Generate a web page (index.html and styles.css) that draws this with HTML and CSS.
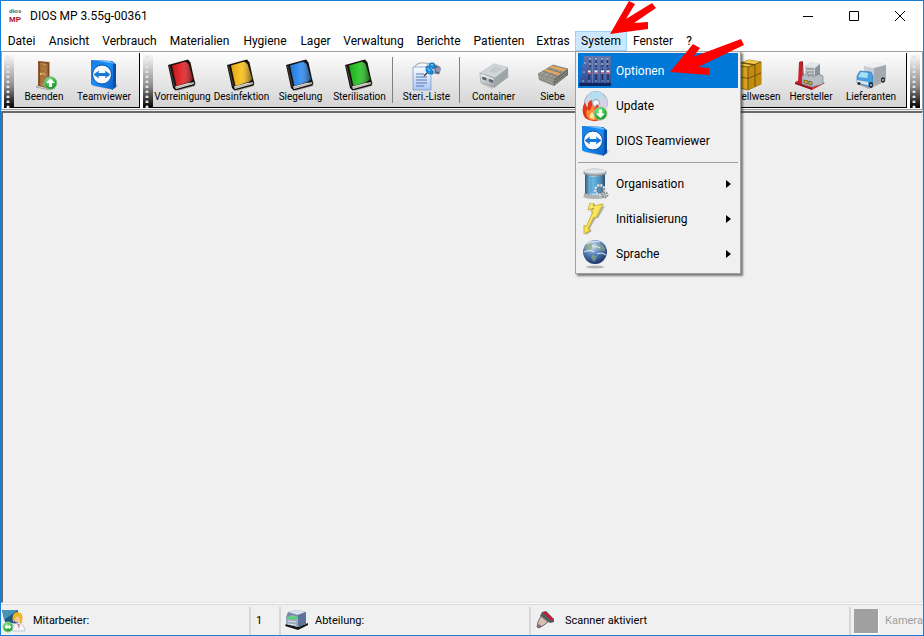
FILE: index.html
```html
<!DOCTYPE html>
<html lang="de">
<head>
<meta charset="utf-8">
<title>DIOS MP 3.55g-00361</title>
<link rel="stylesheet" href="styles.css">
</head>
<body>
<svg class="defs" aria-hidden="true">
  <defs>
    <linearGradient id="g-blue" x1="0" y1="0" x2="1" y2="1"><stop offset="0" stop-color="#1b7be0"/><stop offset=".5" stop-color="#1590f8"/><stop offset="1" stop-color="#0a5fc8"/></linearGradient>
    <linearGradient id="g-shine" x1="0" y1="0" x2="1" y2="0"><stop offset="0" stop-color="#000" stop-opacity=".12"/><stop offset=".45" stop-color="#fff" stop-opacity=".12"/><stop offset="1" stop-color="#000" stop-opacity=".55"/></linearGradient>
    <linearGradient id="g-door" x1="0" y1="0" x2="1" y2="0"><stop offset="0" stop-color="#a36c38"/><stop offset=".6" stop-color="#c9965c"/><stop offset="1" stop-color="#8a5628"/></linearGradient>
    <radialGradient id="g-green" cx=".4" cy=".3" r=".8"><stop offset="0" stop-color="#9be89a"/><stop offset=".6" stop-color="#2fae3c"/><stop offset="1" stop-color="#15782a"/></radialGradient>
    <radialGradient id="g-globe" cx=".4" cy=".25" r=".8"><stop offset="0" stop-color="#d5e6f8"/><stop offset=".45" stop-color="#5b83bd"/><stop offset="1" stop-color="#142a60"/></radialGradient>
    <linearGradient id="g-steel" x1="0" y1="0" x2="1" y2="1"><stop offset="0" stop-color="#e8ebed"/><stop offset="1" stop-color="#9da4a9"/></linearGradient>
    <linearGradient id="g-paper" x1="0" y1="0" x2="0" y2="1"><stop offset="0" stop-color="#fafcff"/><stop offset="1" stop-color="#a9c6f5"/></linearGradient>
    <linearGradient id="g-mixer" x1="0" y1="0" x2="0" y2="1"><stop offset="0" stop-color="#5f76b2"/><stop offset="1" stop-color="#2c4a92"/></linearGradient>
    <linearGradient id="g-tank" x1="0" y1="0" x2="1" y2="0"><stop offset="0" stop-color="#1f5a88"/><stop offset=".4" stop-color="#c4e8fa"/><stop offset="1" stop-color="#1d4f78"/></linearGradient>
    <linearGradient id="g-bolt" x1="0" y1="0" x2="1" y2="1"><stop offset="0" stop-color="#fff27a"/><stop offset="1" stop-color="#f0d832"/></linearGradient>
  </defs>
  <symbol id="i-tv" viewBox="0 0 32 32">
    <path d="M5 27 24 31 30 27 28 24z" fill="#777" opacity=".4"/>
    <path d="M3 1 24 2 28 5 28 28 24 31 24 30z" fill="#0b50a8"/>
    <path d="M4 1 22 2.500Q25 3 25 5V29Q25 30.500 23 30L5 26.500Q3 26 3 24.500V2Q3 1 4 1z" fill="url(#g-blue)"/>
    <path d="M4 1 22 2 28 5 25 4.500z" fill="#6fbcff"/>
    <circle cx="14" cy="15.500" r="9.500" fill="#f8fbff" stroke="#0a4ea4"/>
    <path d="M5.500 15.500 11 11.500 10.500 14H17.500L17 11.500 22.500 15.500 17 19.500 17.500 17H10.500L11 19.500z" fill="#1479d8"/>
  </symbol>
  <symbol id="i-book" viewBox="1 0 32 32">
    <path d="M9 30 30 23 29 27 12 32z" fill="#555" opacity=".4"/>
    <path d="M2 6 22 .500 24.500 3.500 29 24 28.500 26.500 9.500 31.500 7 29z" fill="#17120f"/>
    <path d="M9 27.500 27.500 22.500 28 25 10 30z" fill="#e6e3dc"/>
    <path d="M9 29 28 24" stroke="#8a857c" stroke-width=".6"/>
    <path d="M6 6.500 21.500 2 27.500 21.500 10.500 27z" fill="currentColor"/>
    <path d="M6 6.500 21.500 2 27.500 21.500 10.500 27z" fill="url(#g-shine)"/>
    <path d="M18 1.800 22.500 1.500 24 6zM23 24 27.800 19.500 28.500 23z" fill="#17120f"/>
    <path d="M3.500 7 8.500 27.500" stroke="#5a5148" stroke-width=".8"/>
  </symbol>
  <symbol id="i-door" viewBox="-3 0 32 32">
    <path d="M5 28 18 31 24 29 8 26z" fill="#cfcfcf" stroke="#888" stroke-width=".6"/>
    <path d="M7 2 18.500 3V28L7 27z" fill="#8a5a2c"/>
    <path d="M8.500 3 17.500 5V29.500L8.500 26.500z" fill="url(#g-door)" stroke="#663b18" stroke-width=".5"/>
    <path d="M10 6 12.200 6.500V13L10 12.500zM13.600 6.800 16 7.300V14L13.600 13.500zM10 16 12.200 16.500V24L10 23.500zM13.600 17 16 17.500V25L13.600 24.500z" fill="#b67d45" stroke="#855629" stroke-width=".5"/>
    <circle cx="10" cy="15" r="1" fill="#f0cf60"/>
    <circle cx="19.500" cy="24" r="6.300" fill="url(#g-green)" stroke="#7dc283" stroke-width=".8"/>
    <path d="M19.500 19.500 24 24H21V28H18V24H15z" fill="#fff"/>
  </symbol>
  <symbol id="i-list" viewBox="1 0 32 32">
    <path d="M5 7Q8 3 15 4L27 6 31 9 29 15 22 14 6 11z" fill="#c7cbd0" stroke="#888" stroke-width=".6"/>
    <path d="M5 8Q9 3 17 5L15 9z" fill="#f8f8f8"/>
    <path d="M24 6 30 8 29 15 25 14z" fill="#555a68"/><circle cx="28" cy="10.500" r="2.500" fill="#8f95b8"/>
    <path d="M3 8H18L21 11V31H3z" fill="url(#g-paper)" stroke="#7f99c9" stroke-width=".8"/>
    <path d="M6 15H14M6 18H17M6 21H17M6 24H17M6 27H14" stroke="#5877b5" stroke-width="1"/>
    <path d="M14 17 19 12" stroke="#333" stroke-width="1.300"/>
    <path d="M16 8 18 7 23 12 23 15 19 15 16 12zM20 4 24 4 25 8 23 10 19 7z" fill="#168fe0" stroke="#0867ad" stroke-width=".7"/>
    <path d="M21 5.500 23 6M17.500 9 20 12" stroke="#a9e0ff" stroke-width="1"/>
  </symbol>
  <symbol id="i-container" viewBox="-1 -1 34 34">
    <path d="M2 25 14 31 32 18 28 15z" fill="#999" opacity=".45"/>
    <path d="M1 14 16 4 31 8 17 19z" fill="#d2d6d8" stroke="#b0b5b8" stroke-width=".5"/>
    <path d="M1 14 17 19V29L2 24z" fill="url(#g-steel)" stroke="#858c90" stroke-width=".5"/>
    <path d="M17 19 31 8V18L17 29z" fill="#9ea5a9"/>
    <path d="M10 12 17 7 25 9 18 14z" fill="#c4c9cc"/>
    <path d="M3.500 17.500 8 19V22L3.500 20.500zM10.500 20 15 21.500V24.500L10.500 23z" fill="#5c656b"/>
    <path d="M3 16.500 15.500 20.500" stroke="#fff" stroke-width=".8"/>
  </symbol>
  <symbol id="i-tray" viewBox="0 0 32 32">
    <path d="M1 15 16 6 31 10 17 20z" fill="#a19f98" stroke="#79766e" stroke-width=".7"/>
    <path d="M1 15 17 20V27L2 21z" fill="#8d8b85"/><path d="M17 20 31 10V16L17 27z" fill="#6c6a65"/>
    <path d="M3 17 16 21.500M3 19 16 24M18 22 30 13M18 25 30 15" stroke="#c5c2ba" stroke-width=".8" stroke-dasharray="1 1"/>
    <path d="M6 12 20 17.500M10 9.500 25 14M14 7.500 28 12M5 16 19 7M10 17.500 24 9M14 19 28 10" stroke="#6f6c65" stroke-width=".6"/>
    <path d="M7 11.500 9 10.300 23.500 14.500 21.500 16zM12.500 8.300 15 7 29 10.500 26.500 12.300z" fill="#f2a84c"/>
  </symbol>
  <symbol id="i-boxes" viewBox="2 0 32 32">
    <path d="M2 6 16 1 28 3V25L15 31 2 28z" fill="#d9a31f" stroke="#8c6508" stroke-width=".8"/>
    <path d="M2 6 16 1 28 3 15 8z" fill="#f2c84b"/><path d="M15 8 28 3V25L15 31z" fill="#c28c12"/>
    <path d="M2 17 15 19.500 28 14M8 4 22 6V28M15 8V31M9 3.500 21 5.500M15 8 28 3M2 6 15 8" fill="none" stroke="#5e4305" stroke-width=".8"/>
  </symbol>
  <symbol id="i-factory" viewBox="1 0 32 32">
    <path d="M1 23 12 18 31 24 18 31z" fill="#d32f38"/><path d="M1 23 18 29V31L1 25z" fill="#8f131c"/>
    <path d="M11 7 17 3 26 5V24L11 23z" fill="#c8cdd2"/><path d="M11 7 17 3 26 5 21 9z" fill="#e3e6e9"/><path d="M21 9 26 5V24H21z" fill="#8b9299"/>
    <path d="M12 10H20M12 13H20M12 16H20" stroke="#7b828a" stroke-width="1"/>
    <path d="M5 3 8 2 9 26 4 24z" fill="#c9202b"/><path d="M8 2 9 3 10 26 9 26z" fill="#7d0d16"/>
    <path d="M8 17 14 14V18L19 15V18L25 15 29 17V25L18 28 8 25z" fill="#b7bdc3" stroke="#6e757c" stroke-width=".6"/>
    <path d="M10 21 14 22V25L10 24zM15 22 18 23V26L15 25.500z" fill="#d8b02c" stroke="#403818" stroke-width=".6"/>
  </symbol>
  <symbol id="i-truck" viewBox="0 0 32 32">
    <path d="M4 26 14 30 31 22 29 19z" fill="#777" opacity=".5"/>
    <path d="M9 7 22 3 31 6V20L18 25 9 22z" fill="#c9ced3"/><path d="M9 7 22 3 31 6 19 9z" fill="#eef0f1"/><path d="M19 9 31 6V20L19 25z" fill="#a4aab1"/>
    <path d="M2 17 5 12 16 13 18 17V25L15 28 2 24z" fill="#4aa0df" stroke="#2c6da7" stroke-width=".6"/>
    <path d="M4 16.500 6 13 13 14 12.500 19 3 18z" fill="#a6e2f4"/><path d="M2 21 13 23V26.500L2 23.500z" fill="#dbe2e7"/>
    <ellipse cx="16" cy="26" rx="2" ry="3" fill="#252b31"/><ellipse cx="28" cy="21" rx="2" ry="2.800" fill="#252b31"/><circle cx="4" cy="24.500" r="1.500" fill="#252b31"/>
    <circle cx="16" cy="26" r="1" fill="#c5c5c5"/><circle cx="28" cy="21" r="1" fill="#c5c5c5"/>
  </symbol>
  <symbol id="i-mixer" viewBox="0 0 32 32">
    <path d="M5 1H32V31H0z" fill="url(#g-mixer)"/><path d="M0 28H32V31H0z" fill="#10235c"/>
    <path d="M13.500 2V28M20 2V28M26 2V28" stroke="#8296cc" stroke-width=".6"/>
    <path d="M11 4V12M17 4V12M23 4V12M28.500 4V12M10 14V27M17 14V27M23.500 14V27M29 14V27" stroke="#1c2c58" stroke-width="1.200"/>
    <path d="M10 4H12M16 4H18M22 4H24M27.500 4H29.500M10 9H12M16 9H18M22 9H24M27.500 9H29.500" stroke="#c0b4bd" stroke-width="1.600"/>
    <path d="M9 17H11.500M15.500 17H18.500M22 17H25M27.500 17H30.500" stroke="#f4eef2" stroke-width="3.500"/>
    <path d="M9 18H11.500M15.500 18H18.500M22 18H25M27.500 18H30.500" stroke="#c04860" stroke-width="1.500"/>
    <path d="M9 26H11M16 26H18M22.500 26H24.500M28 26H30" stroke="#b9b4c5" stroke-width="1"/>
    <path d="M5 8H7M4 17H6M3 26H5" stroke="#c9d4f2" stroke-width=".8"/>
  </symbol>
  <symbol id="i-burn" viewBox="-1 0 32 32">
    <circle cx="16" cy="13" r="11.500" fill="#cbd8e5" stroke="#a2adba"/><path d="M16 13 8 4.500Q16-1 23 4z" fill="#b5dff0"/><path d="M16 13 27 9Q29 16 24 22z" fill="#d8cfe8"/>
    <circle cx="16" cy="13" r="3.500" fill="#f5f6f8" stroke="#93a0ad"/>
    <path d="M5 28Q0 20 5 12Q6 17 8 17Q7 11 12 10Q11 15 15 18L17 14Q22 20 20 30Q12 33 5 28z" fill="#e3351a"/>
    <path d="M8 28Q5 24 7 19Q9 22 10 20Q12 17 12 15Q16 20 15 22L17 20Q19 26 16 30Q11 31 8 28z" fill="#ff8d35"/>
    <path d="M10 28Q9 25 12 22Q15 25 14 29z" fill="#ffe7a0"/>
    <circle cx="20.500" cy="23.500" r="6.500" fill="url(#g-green)" stroke="#8bcb8c"/><path d="M19 19.500H22V23.500H25L20.500 28 16 23.500H19z" fill="#fff"/>
  </symbol>
  <symbol id="i-tank" viewBox="-1 0 32 32">
    <ellipse cx="15" cy="28.500" rx="12" ry="2.500" fill="#8a8a8a" opacity=".6"/>
    <path d="M5 4H25V27Q15 31 5 27z" fill="url(#g-tank)"/><path d="M10 9H20V25Q14 26 10 25z" fill="#2e92cf" opacity=".6"/>
    <path d="M4 3Q15-1 26 3V6Q15 10 4 6z" fill="#a9b0b4" stroke="#737b80" stroke-width=".6"/><ellipse cx="15" cy="3.200" rx="11" ry="2.300" fill="#e0e5e7"/>
    <path d="M4 25Q15 29 26 25V28Q15 32 4 28z" fill="#aeb5b9"/>
    <circle cx="20" cy="22" r="4.500" fill="none" stroke="#d7dde1" stroke-width="3" stroke-dasharray="2 1"/><circle cx="20" cy="22" r="3" fill="none" stroke="#68747c"/>
    <circle cx="25" cy="27" r="2.500" fill="none" stroke="#87939a" stroke-width="2" stroke-dasharray="1.500 1"/>
  </symbol>
  <symbol id="i-bolt" viewBox="-1 0 32 32">
    <path d="M12 1H15L14 5 25 3 18 15.500 16 15 9 27 12 28 6 32 6 24 8 25 13 12 11 12 15 6 10 8z" fill="#777" opacity=".5"/>
    <path d="M10 0H14L13 3 23 1 16 15 14 14 8 26 11 27 4 31 4 22 6 24 13 9 11 9 14 5 8 7z" fill="url(#g-bolt)" stroke="#b59a24" stroke-width=".7"/>
  </symbol>
  <symbol id="i-globe" viewBox="-1 0 32 32">
    <ellipse cx="15" cy="29" rx="9" ry="1.500" fill="#777" opacity=".5"/>
    <circle cx="15" cy="14" r="12" fill="url(#g-globe)"/>
    <path d="M5 9Q8 4 13 5L12 8 15 9 11 11 9 14 6 12zM17 5Q23 5 25 11L24 14 22 12 19 13 17 10 19 8zM12 17 17 18 16 21 14 24 11 20z" fill="#8aa67c" opacity=".7"/>
    <path d="M7 6Q13 2 20 4M4 14Q10 11 14 14M17 16Q22 14 26 17M12 9Q17 8 20 10" fill="none" stroke="#f5f9ff" stroke-width="1.300" opacity=".7"/>
  </symbol>
  <symbol id="i-user" viewBox="0 0 24 24">
    <path d="M0 1H16V15L3 13z" fill="#1d5680"/><path d="M0 1H16L2 11z" fill="#4894b6"/>
    <path d="M10 22Q10 14 16 14T23 22z" fill="#f2f5fa" stroke="#a2b0c4" stroke-width=".6"/>
    <circle cx="16" cy="9" r="4.500" fill="#f5c69a"/><path d="M11 13Q9 3 16 3Q22 4 20 12Q21 15 18 14Q19 10 16 7Q13 8 12 13z" fill="#eeb51c"/>
    <path d="M15 15 17 20 18 15z" fill="#dc8791"/>
    <circle cx="6" cy="18" r="5" fill="url(#g-green)" stroke="#9bd09c"/><path d="M2.500 18 5 15.500V17H7V15.500L9.500 18 7 20.500V19H5V20.500z" fill="#fff"/>
  </symbol>
  <symbol id="i-server" viewBox="0 0 24 24">
    <path d="M2 15 14 18 24 14 24 16 14 21 1 17z" fill="#141414"/>
    <path d="M4 3 12 1 22 3V15L14 18 2 15V8z" fill="#788aa6"/><path d="M4 3 12 1 22 3 14 6z" fill="#d9e2ee"/><path d="M14 6 22 3V15L14 18z" fill="#5d739a"/>
    <path d="M2 8 9 6 14 8V18L2 15z" fill="#9aa9bb"/><path d="M3 8 12 7 13 10 4 10z" fill="#51d870"/>
    <path d="M4 12 12 13M4 15 12 16" stroke="#dce5ef"/>
  </symbol>
  <symbol id="i-scanner" viewBox="0 0 24 24">
    <path d="M8 3 12 2 20 10 20 13 16 14 6 7z" fill="#555b5e"/><path d="M9 3 12 3 19 10 18 12z" fill="#d9112c"/>
    <path d="M7 7 14 13 10 16 5 19 3 18 4 13z" fill="#d8bfb4" stroke="#6d6a68" stroke-width="1"/><path d="M4 15 8 17 5 19 3 18z" fill="#77716e"/>
  </symbol>
</svg>

<div class="window">
  <header class="titlebar">
    <span class="logo" aria-hidden="true"><span class="logo-top">dios</span><span class="logo-bottom">MP</span></span>
    <h1 class="title">DIOS MP 3.55g-00361</h1>
    <button class="caption" aria-label="Minimieren"><svg viewBox="0 0 10 10"><path d="M0 5.500H10"/></svg></button>
    <button class="caption" aria-label="Maximieren"><svg viewBox="0 0 10 10"><path d="M.5.5H9.500V9.500H.5z"/></svg></button>
    <button class="caption" aria-label="Schließen"><svg viewBox="0 0 10 10"><path d="M0 0 10 10M10 0 0 10"/></svg></button>
  </header>

  <nav class="menubar">
    <button>Datei</button><button>Ansicht</button><button>Verbrauch</button><button>Materialien</button><button>Hygiene</button><button>Lager</button><button>Verwaltung</button><button>Berichte</button><button>Patienten</button><button>Extras</button>
    <div class="menu-open">
      <button class="active" aria-expanded="true">System</button>
      <div class="dropdown" role="menu">
        <button class="entry selected" role="menuitem"><svg class="icon"><use href="#i-mixer"/></svg>Optionen</button>
        <button class="entry" role="menuitem"><svg class="icon"><use href="#i-burn"/></svg>Update</button>
        <button class="entry" role="menuitem"><svg class="icon"><use href="#i-tv"/></svg>DIOS Teamviewer</button>
        <hr>
        <button class="entry more" role="menuitem"><svg class="icon"><use href="#i-tank"/></svg>Organisation</button>
        <button class="entry more" role="menuitem"><svg class="icon"><use href="#i-bolt"/></svg>Initialisierung</button>
        <button class="entry more" role="menuitem"><svg class="icon"><use href="#i-globe"/></svg>Sprache</button>
      </div>
      <svg class="arrows" viewBox="575 0 175 80" aria-hidden="true">
        <path d="M610 34 629 1 635 4 626 19 652 3 656 8 634 23 648 22 648 29z"/>
        <path d="M670 72 693 44 700 48 693 57 741 39 744 45 698 67 709 68 709 75z"/>
      </svg>
    </div>
    <button>Fenster</button><button>?</button>
  </nav>

  <div class="toolbars">
    <div class="band">
      <span class="grip"></span>
      <div class="tools wide">
        <button class="tool"><svg class="icon"><use href="#i-door"/></svg>Beenden</button>
        <button class="tool"><svg class="icon"><use href="#i-tv"/></svg>Teamviewer</button>
      </div>
    </div>
    <div class="band grow">
      <span class="grip"></span>
      <div class="tools">
        <button class="tool"><svg class="icon red"><use href="#i-book"/></svg>Vorreinigung</button>
        <button class="tool"><svg class="icon yellow"><use href="#i-book"/></svg>Desinfektion</button>
        <button class="tool"><svg class="icon blue"><use href="#i-book"/></svg>Siegelung</button>
        <button class="tool"><svg class="icon green"><use href="#i-book"/></svg>Sterilisation</button>
        <span class="divider"></span>
        <button class="tool"><svg class="icon"><use href="#i-list"/></svg>Steri.-Liste</button>
        <span class="divider"></span>
        <button class="tool"><svg class="icon"><use href="#i-container"/></svg>Container</button>
        <button class="tool"><svg class="icon"><use href="#i-tray"/></svg>Siebe</button>
      </div>
      <div class="tools wide end">
        <button class="tool"><svg class="icon"><use href="#i-boxes"/></svg>Bestellwesen</button>
        <button class="tool"><svg class="icon"><use href="#i-factory"/></svg>Hersteller</button>
        <button class="tool"><svg class="icon"><use href="#i-truck"/></svg>Lieferanten</button>
      </div>
    </div>
    <span class="grip"></span>
  </div>

  <main class="workspace"></main>

  <footer class="status">
    <div class="cell"><svg><use href="#i-user"/></svg>Mitarbeiter:</div>
    <div class="cell number">1</div>
    <div class="cell"><svg><use href="#i-server"/></svg>Abteilung:</div>
    <div class="cell"><svg><use href="#i-scanner"/></svg>Scanner aktiviert</div>
    <div class="cell off"><span class="camera"></span>Kamera</div>
  </footer>
</div>
</body>
</html>
```

FILE: styles.css
```css
* { box-sizing: border-box; }

body {
  margin: 0;
  color: #000;
  font: 12px/16px Roboto, "Open Sans", sans-serif;
}

button {
  margin: 0;
  padding: 0;
  border: 0;
  background: none;
  color: inherit;
  font: inherit;
  white-space: nowrap;
}

.defs { position: absolute; width: 0; height: 0; }

.window {
  display: flex;
  flex-direction: column;
  min-height: 100vh;
  overflow: hidden;
  border: 1px solid #1a80d6;
  background: #f0f0f0;
}

/* Title bar */
.titlebar {
  display: flex;
  align-items: center;
  height: 30px;
  padding-left: 8px;
  background: #fff;
}
.logo {
  display: flex;
  flex-direction: column;
  width: 21px;
  font: bold 6px/7px "Liberation Sans", sans-serif;
  color: #2c5c50;
}
.logo-bottom { color: #a3142c; font-size: 8px; line-height: 9px; }
.title { flex: 1; margin: 0; font-size: 12px; font-weight: 400; }
.caption { display: grid; place-items: center; width: 46px; height: 30px; }
.caption svg { width: 10px; height: 10px; overflow: visible; fill: none; stroke: #000; }

/* Menu bar */
.menubar {
  display: grid;
  grid-template-columns: 41px 54px 67px 73px 58px 43px 73px 57px 64px 44px 52px 52px 20px;
  height: 20px;
  background: #fff;
  line-height: 18px;
}
.menu-open { position: relative; display: grid; }
.menubar .active { background: #cce8ff; box-shadow: inset 0 0 0 1px #99d1ff; }

.dropdown {
  position: absolute;
  z-index: 2;
  top: 20px;
  left: 0;
  width: 166px;
  padding: 1px 2px 2px;
  border: 1px solid #a0a0a0;
  background: #f0f0f0;
  box-shadow: 2px 2px 2px rgba(0, 0, 0, .5);
}
.entry {
  display: flex;
  align-items: center;
  gap: 5px;
  width: 100%;
  height: 35px;
  padding-left: 1px;
}
.entry.selected { background: #0078d7; color: #fff; }
.entry.more::after {
  content: "";
  margin: 0 7px 0 auto;
  border: solid transparent;
  border-width: 4px 0 4px 5px;
  border-left-color: #000;
}
.dropdown hr { margin: 4px 0 3px; border: 0; border-top: 1px solid #a0a0a0; }
.icon { flex: none; width: 32px; height: 32px; }

.arrows {
  position: absolute;
  z-index: 3;
  top: -31px;
  left: 0;
  width: 175px;
  height: 80px;
  fill: #f00;
  pointer-events: none;
}

/* Toolbars */
.toolbars {
  display: flex;
  gap: 3px;
  height: 59px;
  padding: 1px 2px;
  border: 1px solid #a0a0a0;
  background: #fff;
}
.band { display: flex; }
.band.grow { flex: 1; }
.grip {
  flex: none;
  width: 10px;
  background:
    radial-gradient(circle at 4px 4px, #e4e4e4 1px, transparent 2px) 0 0 / 10px 5px,
    linear-gradient(#fff, #8c8c8c 60%, #000);
}
.tools {
  display: flex;
  border-bottom: 1px solid #000;
  background: linear-gradient(#fcfcfc, #d4d4d4);
}
.band > .tools:last-child { padding-right: 5px; border-right: 1px solid #000; }
.end { flex: 1; justify-content: flex-end; }
.tool {
  display: flex;
  flex-direction: column;
  align-items: center;
  width: 59px;
  padding-top: 6px;
  font-size: 10px;
  line-height: 12px;
}
.wide .tool { width: 60px; }
.divider { width: 1px; margin: 4px 4px 4px 3px; background: #808080; }
.red { color: #e3181c; }
.yellow { color: #fbbd12; }
.blue { color: #2587f2; }
.green { color: #1fc21c; }

.workspace {
  flex: 1;
  margin-top: 1px;
  border: solid #696969;
  border-width: 2px 1px 1px 2px;
  border-right-color: #e3e3e3;
  border-bottom-color: #e3e3e3;
}

/* Status bar */
.status {
  display: grid;
  grid-template-columns: 250px 30px 250px 1fr 72px;
  height: 32px;
  border-top: 1px solid #fff;
  font: 11px/14px Roboto, "Liberation Sans", sans-serif;
  box-shadow: inset 0 1px #d7d7d7;
}
.cell {
  display: flex;
  align-items: center;
  gap: 7px;
  margin-top: 3px;
  padding-left: 3px;
  border-right: 2px solid #d7d7d7;
  white-space: nowrap;
}
.cell:first-child { padding-left: 1px; }
.cell svg { flex: none; width: 24px; height: 24px; }
.number { padding-left: 5px; }
.off { color: #a0a0a0; border-right: 0; }
.camera { width: 24px; height: 24px; background: #a0a0a0; box-shadow: 1px 1px #fff; }
```
